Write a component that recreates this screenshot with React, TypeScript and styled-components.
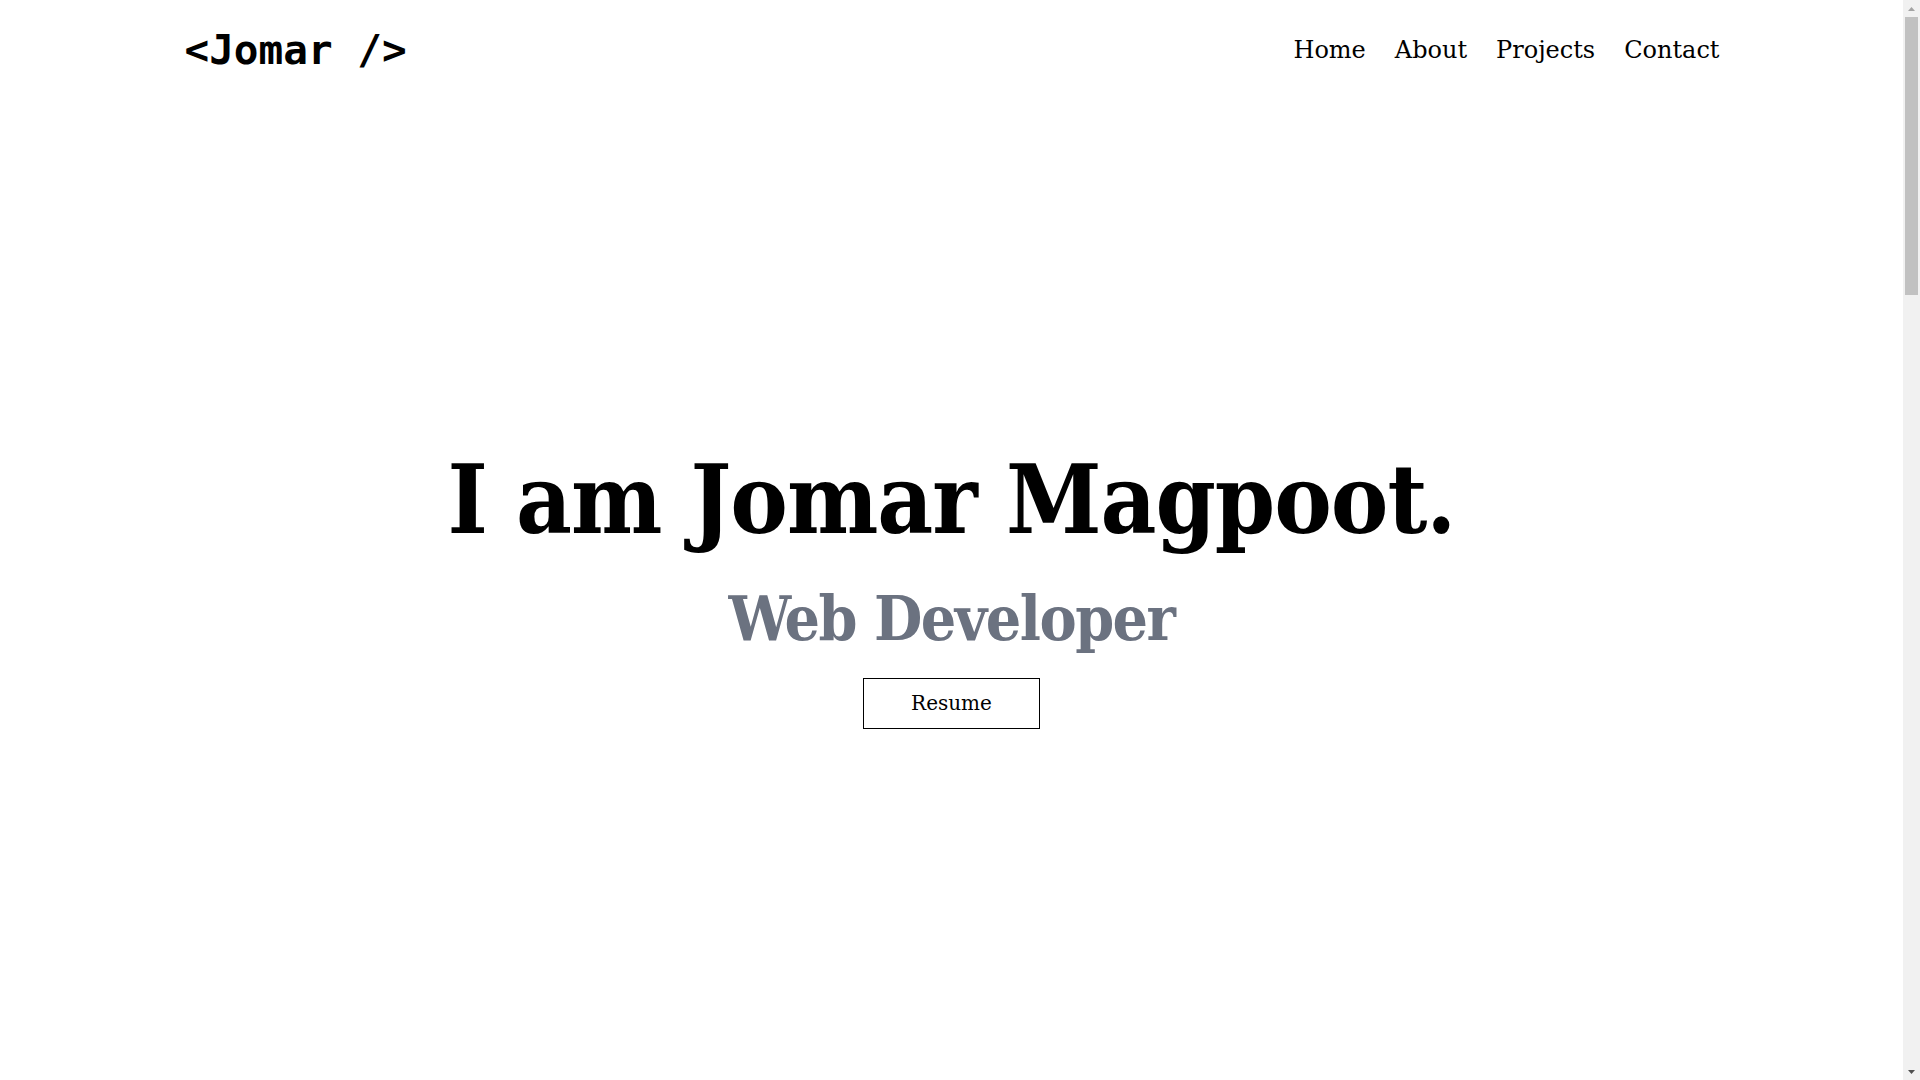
import React from "react";
import styled, { createGlobalStyle } from "styled-components";

const GlobalStyle = createGlobalStyle`
  *, *::before, *::after { box-sizing: border-box; }
  html, body { margin: 0; padding: 0; background: #ffffff; }
  body {
    font-family: "DejaVu Serif", "Liberation Serif", serif;
    color: #000000;
    padding-right: 17px;
  }
  a { color: inherit; text-decoration: none; }
`;

const Page = styled.div`
  display: flex;
  flex-direction: column;
`;

const Container = styled.div`
  width: 100%;
  max-width: 1536px;
  margin: 0 auto;
`;

const Header = styled.header`
  height: 100px;
  display: flex;
  align-items: center;
  justify-content: space-between;
`;

const Logo = styled.a`
  font-family: "DejaVu Sans Mono", "Liberation Mono", monospace;
  font-weight: 700;
  font-size: 41px;
  line-height: 1;
  white-space: pre;
  margin-left: 1px;
`;

const Nav = styled.nav`
  display: flex;
  align-items: center;
  gap: 29px;
`;

const NavLink = styled.a`
  font-size: 24px;
  line-height: 32px;
  font-weight: 400;
`;

const Hero = styled.section`
  height: calc(100vh - 100px);
  display: flex;
  flex-direction: column;
  align-items: center;
  justify-content: center;
  text-align: center;
  font-family: "DejaVu Serif Condensed", "DejaVu Serif", serif;
  font-stretch: semi-condensed;
`;

const Title = styled.h1`
  margin: 0;
  font-size: 96px;
  line-height: 1;
  font-weight: 700;
  letter-spacing: -1px;
  color: #000000;
`;

const Subtitle = styled.h2`
  margin: 40px 0 0;
  font-size: 62px;
  line-height: 1;
  font-weight: 700;
  letter-spacing: -1.5px;
  color: #6b7280;
`;

const ResumeButton = styled.a`
  margin-top: 28px;
  width: 177px;
  height: 51px;
  display: flex;
  align-items: center;
  justify-content: center;
  border: 1px solid #000000;
  font-family: "DejaVu Serif", serif;
  font-stretch: normal;
  font-size: 20px;
  color: #000000;
`;

const Section = styled.section<{ $tall: number }>`
  min-height: ${(p) => p.$tall}px;
  display: flex;
  flex-direction: column;
  align-items: center;
  justify-content: center;
  gap: 24px;
  text-align: center;
`;

const SectionTitle = styled.h2`
  margin: 0;
  font-size: 48px;
  font-weight: 700;
`;

const SectionText = styled.p`
  margin: 0;
  max-width: 760px;
  font-size: 20px;
  line-height: 1.7;
  color: #4b5563;
`;

/* Window scrollbar as it appears in the capture (page is ~4 screens tall) */
const ScrollTrack = styled.div`
  position: fixed;
  top: 0;
  right: 0;
  width: 17px;
  height: 100vh;
  background: #f1f1f1;
  display: flex;
  flex-direction: column;
  align-items: center;
  justify-content: space-between;
  z-index: 10;
`;

const ScrollArrow = styled.div`
  height: 17px;
  width: 17px;
  display: flex;
  align-items: center;
  justify-content: center;
`;

const ScrollThumb = styled.div`
  width: 13px;
  height: 278px;
  background: #c1c1c1;
  margin-bottom: auto;
`;

export default function App() {
  return (
    <>
      <GlobalStyle />
      <Page>
        <Container>
          <Header>
            <Logo href="#home">{"<Jomar />"}</Logo>
            <Nav>
              <NavLink href="#home">Home</NavLink>
              <NavLink href="#about">About</NavLink>
              <NavLink href="#projects">Projects</NavLink>
              <NavLink href="#contact">Contact</NavLink>
            </Nav>
          </Header>
        </Container>
        <Hero id="home">
          <Title>I am Jomar Magpoot.</Title>
          <Subtitle>Web Developer</Subtitle>
          <ResumeButton href="#resume">Resume</ResumeButton>
        </Hero>
        <Section id="about" $tall={1000}>
          <SectionTitle>About</SectionTitle>
          <SectionText>
            I build responsive, accessible websites and web applications with modern tools.
          </SectionText>
        </Section>
        <Section id="projects" $tall={1100}>
          <SectionTitle>Projects</SectionTitle>
          <SectionText>A selection of things I have built recently.</SectionText>
        </Section>
        <Section id="contact" $tall={900}>
          <SectionTitle>Contact</SectionTitle>
          <SectionText>Feel free to reach out for collaborations or just a friendly hello.</SectionText>
        </Section>
      </Page>
      <ScrollTrack aria-hidden="true">
        <ScrollArrow>
          <svg width="7" height="4" viewBox="0 0 7 4">
            <path d="M0 4 L3.5 0 L7 4 Z" fill="#a3a3a3" />
          </svg>
        </ScrollArrow>
        <ScrollThumb />
        <ScrollArrow>
          <svg width="7" height="4" viewBox="0 0 7 4">
            <path d="M0 0 L7 0 L3.5 4 Z" fill="#505050" />
          </svg>
        </ScrollArrow>
      </ScrollTrack>
    </>
  );
}
